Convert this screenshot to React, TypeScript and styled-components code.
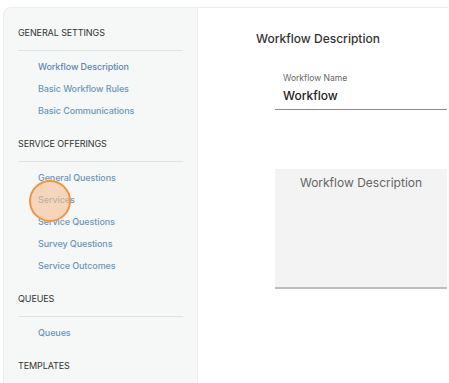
import React from 'react';
import styled, { createGlobalStyle } from 'styled-components';

const GlobalStyle = createGlobalStyle`
	html, body {
		margin: 0;
		padding: 0;
		background: #fff;
		overflow: hidden;
	}
	body {
		font-family: Inter, 'Liberation Sans', sans-serif;
		width: 449px;
		height: 383px;
	}
`;

interface Section {
	title: string;
	links: string[];
}

const sections: Section[] = [
	{
		title: 'General Settings',
		links: ['Workflow Description', 'Basic Workflow Rules', 'Basic Communications'],
	},
	{
		title: 'Service Offerings',
		links: ['General Questions', 'Services', 'Service Questions', 'Survey Questions', 'Service Outcomes'],
	},
	{ title: 'Queues', links: ['Queues'] },
	{ title: 'Templates', links: [] },
];

const Page = styled.div`
	display: flex;
	height: 383px;
	padding: 7px 1px 0 3px;
	box-sizing: border-box;
	position: relative;
`;

const Sidebar = styled.nav`
	width: 195px;
	flex-shrink: 0;
	box-sizing: border-box;
	background: #f6f7f7;
	border: 1px solid #eceeee;
	border-bottom: none;
	border-top-left-radius: 8px;
	padding: 19px 14px 0 14px;
	display: flex;
	flex-direction: column;
	gap: 21px;
`;

const SectionBlock = styled.div`
	display: flex;
	flex-direction: column;
`;

const Heading = styled.div`
	font-size: 9px;
	line-height: 12px;
	color: #333;
	text-transform: uppercase;
	letter-spacing: -0.1px;
`;

const Divider = styled.div`
	height: 1px;
	background: #dfe2e3;
	margin: 11px 0 10px;
`;

const LinkList = styled.div`
	display: flex;
	flex-direction: column;
	gap: 10px;
	padding-left: 20px;
`;

const NavLink = styled.a<{ active?: boolean }>`
	font-size: 9px;
	line-height: 12px;
	font-weight: ${(p) => (p.active ? 550 : 500)};
	color: ${(p) => (p.active ? '#5a89b2' : '#6b98bc')};
	text-decoration: none;
	letter-spacing: -0.1px;
`;

const Main = styled.main`
	flex: 1;
	border-top: 1px solid #ececec;
	padding: 23px 0 0 58px;
	box-sizing: border-box;
`;

const Title = styled.h2`
	margin: 0;
	font-size: 12px;
	line-height: 16px;
	font-weight: 500;
	color: #333;
`;

const Form = styled.div`
	width: 172px;
	margin: 25px 0 0 19px;
	display: flex;
	flex-direction: column;
`;

const Field = styled.div`
	border-bottom: 1px solid #8a8a8a;
	padding: 0 0 4px 8px;
`;

const FieldLabel = styled.div`
	font-size: 8.5px;
	line-height: 12px;
	color: #666;
`;

const FieldValue = styled.div`
	margin-top: 3px;
	font-size: 12px;
	line-height: 18px;
	font-weight: 500;
	color: #222;
`;

const TextArea = styled.div`
	margin-top: 59px;
	height: 120px;
	box-sizing: border-box;
	background: #f3f3f3;
	border-bottom: 2px solid #bdbdbd;
	text-align: center;
	padding-top: 6px;
	font-size: 12px;
	line-height: 16px;
	color: #666;
`;

const Highlight = styled.div`
	position: absolute;
	left: 29px;
	top: 180px;
	width: 38px;
	height: 38px;
	border-radius: 50%;
	border: 2px solid #f39440;
	background: rgba(247, 190, 150, 0.6);
`;

export default function App() {
	return (
		<>
			<GlobalStyle />
			<Page>
				<Sidebar>
					{sections.map((section) => (
						<SectionBlock key={section.title}>
							<Heading>{section.title}</Heading>
							<Divider />
							{section.links.length > 0 && (
								<LinkList>
									{section.links.map((link, i) => (
										<NavLink key={link} active={section.title === 'General Settings' && i === 0}>
											{link}
										</NavLink>
									))}
								</LinkList>
							)}
						</SectionBlock>
					))}
				</Sidebar>
				<Main>
					<Title>Workflow Description</Title>
					<Form>
						<Field>
							<FieldLabel>Workflow Name</FieldLabel>
							<FieldValue>Workflow</FieldValue>
						</Field>
						<TextArea>Workflow Description</TextArea>
					</Form>
				</Main>
				<Highlight />
			</Page>
		</>
	);
}
